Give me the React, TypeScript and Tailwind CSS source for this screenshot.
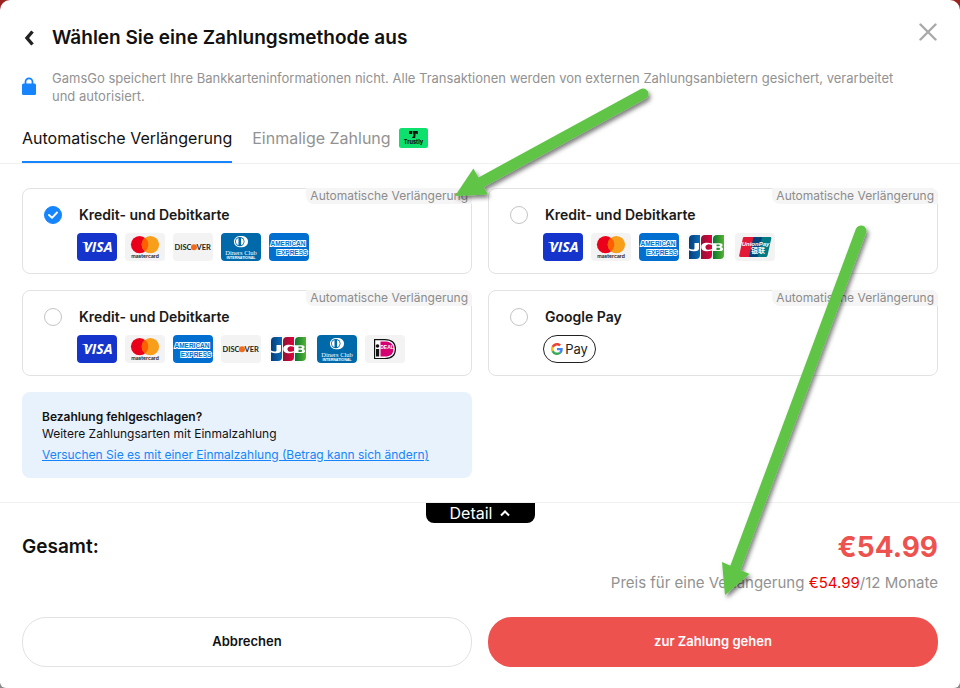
import clsx from "clsx";
import { useState } from "react";
import type { ReactNode } from "react";

type Brand = "visa" | "mastercard" | "discover" | "diners" | "amex" | "jcb" | "unionpay" | "ideal" | "gpay";

type PaymentMethod = {
  id: string;
  name: string;
  brands: Brand[];
};

const methods: PaymentMethod[] = [
  { id: "card-1", name: "Kredit- und Debitkarte", brands: ["visa", "mastercard", "discover", "diners", "amex"] },
  { id: "card-2", name: "Kredit- und Debitkarte", brands: ["visa", "mastercard", "amex", "jcb", "unionpay"] },
  { id: "card-3", name: "Kredit- und Debitkarte", brands: ["visa", "mastercard", "amex", "discover", "jcb", "diners", "ideal"] },
  { id: "google-pay", name: "Google Pay", brands: ["gpay"] },
];

const sans = "'Liberation Sans', Arial, sans-serif";

const Badge = ({ label, bg, children }: { label: string; bg: string; children: ReactNode }) => (
  <svg width="40" height="28" viewBox="0 0 40 28" role="img" aria-label={label} className="rounded">
    <rect width="40" height="28" fill={bg} />
    {children}
  </svg>
);

const Visa = () => (
  <Badge label="Visa" bg="#1434cb">
    <text x="21" y="19" textAnchor="middle" fontFamily="'Open Sans', sans-serif" fontSize="14" fontWeight="700" fontStyle="italic" fill="#fff">
      VISA
    </text>
    <path d="M5 9h4.200c.8 0 1.300.4 1.500 1.100l.8 3.400C10.300 11.300 8 9.700 5 9.200z" fill="#fff" />
  </Badge>
);

const Mastercard = () => (
  <Badge label="Mastercard" bg="#f3f3f3">
    <circle cx="14.600" cy="11.600" r="8.700" fill="#eb001b" />
    <circle cx="25.400" cy="11.600" r="8.700" fill="#f79e1b" />
    <path d="M20 4.800a8.700 8.700 0 0 1 0 13.600 8.700 8.700 0 0 1 0-13.600z" fill="#ff5f00" />
    <text x="20" y="25" textAnchor="middle" fontFamily="Inter, sans-serif" fontSize="5" fontWeight="600" fill="#111">
      mastercard
    </text>
  </Badge>
);

const Discover = () => (
  <Badge label="Discover" bg="#f3f3f3">
    <text x="18.500" y="17" textAnchor="end" fontFamily="Lato, sans-serif" fontSize="7.500" fontWeight="700" fill="#231f20">
      DISC
    </text>
    <circle cx="21" cy="14.200" r="3" fill="#f26b1d" />
    <text x="23.500" y="17" fontFamily="Lato, sans-serif" fontSize="7.500" fontWeight="700" fill="#231f20">
      VER
    </text>
  </Badge>
);

const Diners = () => (
  <Badge label="Diners Club" bg="#0069aa">
    <path d="M18.500 3h3a5.600 5.600 0 0 1 0 11.200h-3a5.600 5.600 0 0 1 0-11.200z" fill="#fff" />
    <circle cx="18.800" cy="8.600" r="4.700" fill="#0069aa" />
    <path d="M17.500 4.900a3.900 3.900 0 0 0 0 7.400zM20.100 4.900a3.900 3.900 0 0 1 0 7.400z" fill="#fff" />
    <text x="20" y="22" textAnchor="middle" fontFamily="'Liberation Serif', serif" fontSize="6.500" fill="#fff">
      Diners Club
    </text>
    <text x="20" y="25.500" textAnchor="middle" fontFamily={sans} fontSize="3.600" fontWeight="700" fill="#fff">
      INTERNATIONAL
    </text>
  </Badge>
);

const Amex = () => (
  <Badge label="American Express" bg="#016fd0">
    <g fontFamily={sans} fontSize="6.500" fontWeight="700" fill="#016fd0" stroke="#fff" strokeWidth="1.800" paintOrder="stroke">
      <text x="19" y="12.500" textAnchor="middle">
        AMERICAN
      </text>
      <text x="23" y="21.500" textAnchor="middle">
        EXPRESS
      </text>
    </g>
  </Badge>
);

const Jcb = () => (
  <Badge label="JCB" bg="#fafafa">
    <defs>
      <linearGradient id="jcb-blue">
        <stop offset="0" stopColor="#063e7c" />
        <stop offset="1" stopColor="#0b6cb8" />
      </linearGradient>
      <linearGradient id="jcb-red">
        <stop offset="0" stopColor="#8a1538" />
        <stop offset="1" stopColor="#e4003a" />
      </linearGradient>
      <linearGradient id="jcb-green">
        <stop offset="0" stopColor="#08762f" />
        <stop offset="1" stopColor="#57b331" />
      </linearGradient>
    </defs>
    <path d="M2 6a4 4 0 0 1 4-4h7v20a4 4 0 0 1-4 4H2z" fill="url(#jcb-blue)" />
    <path d="M14 6a4 4 0 0 1 4-4h7v20a4 4 0 0 1-4 4h-7z" fill="url(#jcb-red)" />
    <path d="M26 6a4 4 0 0 1 4-4h7v20a4 4 0 0 1-4 4h-7z" fill="url(#jcb-green)" />
    <path d="M7.500 10H12v5.500c0 2-1.500 2.700-4.400 2.700-2.500 0-4-.3-5.600-1v-1.700c1.500.7 2.700 1 3.800 1 1.200 0 1.700-.4 1.700-1.300z" fill="#fff" />
    <path d="M25 11.900c-1.500-.5-3-.8-4.300-.5-3 .6-3 4.700 0 5.300 1.300.3 2.800 0 4.300-.6v1.500c-5.500 1.600-10.800.7-10.800-3.600s5.300-5.100 10.800-3.600z" fill="#fff" />
    <path
      d="M26 10.200h7c3.300 0 3.400 3.200.8 3.700 3.200.4 3 4.200-.5 4.200H26zm3.500 1.200v1.900h2.400c1.300 0 1.300-1.900 0-1.900zm0 3.300v2.200h2.600c1.500 0 1.500-2.200 0-2.200z"
      fill="#fff"
      fillRule="evenodd"
    />
  </Badge>
);

const UnionPay = () => (
  <Badge label="UnionPay" bg="#f3f3f3">
    <path d="M9.500 4H20l-4.500 20H5.500C4.500 24 4 23.300 4.200 22.500L7.800 5.400C8 4.500 8.700 4 9.500 4z" fill="#e21836" />
    <path d="M18.500 4H29l-4.500 20H14z" fill="#00447c" />
    <path d="M27 4h8c1 0 1.500.7 1.300 1.500l-3.800 17c-.2.900-.9 1.500-1.800 1.500h-8z" fill="#007b84" />
    <text x="20.500" y="13" textAnchor="middle" fontFamily={sans} fontSize="6" fontWeight="700" fontStyle="italic" fill="#fff">
      UnionPay
    </text>
    <text x="23" y="20" textAnchor="middle" fontFamily="'Noto Sans CJK SC', sans-serif" fontSize="7" fontWeight="700" fill="#fff">
      银联
    </text>
  </Badge>
);

const Ideal = () => (
  <Badge label="iDEAL" bg="#f3f3f3">
    <path d="M9.600 4.600h10.200c7.200 0 10.600 3.800 10.600 9.400s-3.400 9.500-10.600 9.500H9.600z" fill="#fff" stroke="#111" strokeWidth="1.200" />
    <path d="M15.500 6.500h4.300c5.700 0 8.600 2.600 8.600 7.500s-2.900 7.600-8.600 7.600h-4.300z" fill="#d50072" />
    <circle cx="12.500" cy="11" r="1.800" fill="#111" />
    <path d="M11 14h3.200v7.600H11z" fill="#111" />
    <text x="22" y="14" textAnchor="middle" fontFamily={sans} fontSize="5" fontWeight="700" fill="#fff">
      DEAL
    </text>
  </Badge>
);

const GooglePay = () => (
  <span className="flex h-7 w-[53px] items-center justify-center gap-0.5 rounded-full border border-[#222] bg-white">
    <svg width="12" height="12" viewBox="0 0 48 48" aria-hidden="true">
      <path fill="#ea4335" d="M24 9.500c3.540 0 6.710 1.220 9.210 3.600l6.850-6.850C35.900 2.380 30.470 0 24 0 14.620 0 6.510 5.380 2.560 13.220l7.980 6.190C12.430 13.720 17.740 9.500 24 9.500z" />
      <path fill="#4285f4" d="M46.980 24.550c0-1.570-.15-3.090-.38-4.550H24v9.020h12.940c-.58 2.960-2.260 5.480-4.780 7.180l7.730 6c4.510-4.180 7.090-10.360 7.090-17.650z" />
      <path fill="#fbbc05" d="M10.530 28.590c-.48-1.450-.76-2.990-.76-4.590s.27-3.140.76-4.590l-7.980-6.190C.92 16.460 0 20.120 0 24s.92 7.540 2.560 10.780z" />
      <path fill="#34a853" d="M24 48c6.480 0 11.930-2.130 15.890-5.810l-7.730-6c-2.150 1.450-4.920 2.300-8.160 2.300-6.260 0-11.570-4.220-13.470-9.910l-7.980 6.190C6.510 42.620 14.620 48 24 48z" />
    </svg>
    <span className="text-[13px] leading-4 text-[#222]">Pay</span>
  </span>
);

const brandLogos: Record<Brand, () => ReactNode> = {
  visa: Visa,
  mastercard: Mastercard,
  discover: Discover,
  diners: Diners,
  amex: Amex,
  jcb: Jcb,
  unionpay: UnionPay,
  ideal: Ideal,
  gpay: GooglePay,
};

const TrustlyLogo = () => (
  <svg width="29" height="20" viewBox="0 0 29 20" role="img" aria-label="Trustly">
    <rect width="29" height="20" rx="2.500" fill="#0ee06e" />
    <path d="M10 3h3.200v3H10zM13.700 3h5.100v3.200l-2.200-.7-.4 4.500h-3.400l1.700-2.200z" fill="#111" />
    <text x="14.500" y="16" textAnchor="middle" fontFamily="Inter, sans-serif" fontSize="5.500" fontWeight="800" fill="#111">
      Trustly
    </text>
  </svg>
);

const MethodCard = ({ method, checked, onSelect }: { method: PaymentMethod; checked: boolean; onSelect: () => void }) => (
  <label htmlFor={method.id} className="relative flex h-[86px] cursor-pointer gap-3.5 rounded-lg border border-[#e2e2e2] pt-4 pl-5">
    <span className="absolute -top-px -right-px rounded-tr-lg rounded-bl-lg bg-[#f5f5f5] px-1 text-[12px] leading-4 text-[#8c8c8c]">
      Automatische Verlängerung
    </span>
    <span className="relative h-5 w-5 shrink-0">
      <input
        id={method.id}
        type="radio"
        name="method"
        checked={checked}
        onChange={onSelect}
        className="m-px block h-[18px] w-[18px] appearance-none rounded-full border border-[#c4c4c4] bg-white checked:border-[#1684fc] checked:bg-[#1684fc]"
      />
      {checked && (
        <svg width="18" height="18" viewBox="0 0 18 18" fill="none" className="pointer-events-none absolute top-px left-px" aria-hidden="true">
          <path d="M5 9l3 2.800 5-5.300" stroke="#fff" strokeWidth="1.900" strokeLinecap="round" strokeLinejoin="round" />
        </svg>
      )}
    </span>
    <span className="flex flex-col gap-2">
      <span className="pl-0.5 text-[14px] leading-5 font-semibold text-[#1a1a1a]">{method.name}</span>
      <span className="flex gap-2">
        {method.brands.map((brand) => {
          const Logo = brandLogos[brand];
          return <Logo key={brand} />;
        })}
      </span>
    </span>
  </label>
);

const Arrows = () => (
  <svg width="960" height="688" viewBox="0 0 960 688" className="pointer-events-none absolute top-0 left-0" aria-hidden="true">
    <defs>
      <filter id="arrow-shadow" x="-10%" y="-10%" width="120%" height="120%">
        <feDropShadow dx="2" dy="3" stdDeviation="2" floodColor="#000" floodOpacity="0.5" />
      </filter>
    </defs>
    <g fill="#61c546" stroke="#61c546" filter="url(#arrow-shadow)">
      <path d="M643 94L478 184" strokeWidth="11" strokeLinecap="round" />
      <path d="M455 196l18.400-27.500 14.600 26z" stroke="none" />
      <path d="M861 231L735 569" strokeWidth="11" strokeLinecap="round" />
      <path d="M725 595l-3-33 27.500 12z" stroke="none" />
    </g>
  </svg>
);

const App = () => {
  const [tab, setTab] = useState<"auto" | "once">("auto");
  const [selected, setSelected] = useState("card-1");

  return (
    <div className="relative min-h-screen bg-[linear-gradient(#9c2420_50%,#8a8a8a_50%)] font-[Inter,sans-serif]">
      <main className="min-h-screen rounded-t-[10px] rounded-b-md bg-white">
        <header className="flex h-[69px] items-start justify-between px-[22px] pt-6">
          <div className="flex items-center gap-4">
            <button type="button" aria-label="Zurück" className="flex h-7 w-[14px] items-center justify-center">
              <svg width="14" height="18" viewBox="0 0 14 18" fill="none" aria-hidden="true">
                <path d="M10.500 2.500L5 9l5.500 6.500" stroke="#222" strokeWidth="3.400" />
              </svg>
            </button>
            <h1 className="text-[19px] leading-7 font-semibold text-[#111]">Wählen Sie eine Zahlungsmethode aus</h1>
          </div>
          <button type="button" aria-label="Schließen" className="flex h-4 w-5 items-center justify-center">
            <svg width="18" height="18" viewBox="0 0 18 18" fill="none" aria-hidden="true">
              <path d="M1.500 1.500l15 15M16.500 1.500l-15 15" stroke="#aaa" strokeWidth="2.400" strokeLinecap="round" />
            </svg>
          </button>
        </header>

        <div className="flex items-start gap-4 pr-12 pl-[22px]">
          <svg width="14" height="18" viewBox="0 0 14 18" fill="none" className="mt-2 shrink-0" aria-hidden="true">
            <path d="M3.500 8V4.800a3.500 3.500 0 0 1 7 0V8" stroke="#1684fc" strokeWidth="1.800" />
            <rect y="6.500" width="14" height="11.500" rx="1.500" fill="#1684fc" />
          </svg>
          <p className="text-[13px] leading-[18px] text-[#929292]">
            GamsGo speichert Ihre Bankkarteninformationen nicht. Alle Transaktionen werden von externen Zahlungsanbietern
            gesichert, verarbeitet und autorisiert.
          </p>
        </div>

        <div role="tablist" className="mt-[10px] flex h-[49px] items-stretch gap-5 border-b border-[#f0f0f0] px-[22px]">
          <button
            type="button"
            role="tab"
            aria-selected={tab === "auto"}
            onClick={() => setTab("auto")}
            className={clsx("border-b-2 text-[16px]", tab === "auto" ? "border-[#1684fc] text-[#111]" : "border-transparent text-[#929292]")}
          >
            Automatische Verlängerung
          </button>
          <button
            type="button"
            role="tab"
            aria-selected={tab === "once"}
            onClick={() => setTab("once")}
            className={clsx("flex items-center gap-2 border-b-2 text-[16px]", tab === "once" ? "border-[#1684fc] text-[#111]" : "border-transparent text-[#929292]")}
          >
            Einmalige Zahlung
            <TrustlyLogo />
          </button>
        </div>

        <section className="grid grid-cols-2 gap-4 px-[22px] pt-6 pb-6">
          {methods.map((method) => (
            <MethodCard key={method.id} method={method} checked={selected === method.id} onSelect={() => setSelected(method.id)} />
          ))}
          <div className="h-[86px] rounded-lg bg-[#e8f2fd] px-5 pt-4 text-[12px] leading-[17px] text-[#111]">
            <p className="font-semibold">Bezahlung fehlgeschlagen?</p>
            <p>Weitere Zahlungsarten mit Einmalzahlung</p>
            <a href="#einmalzahlung" className="mt-1 block text-[#1684fc] underline">
              Versuchen Sie es mit einer Einmalzahlung (Betrag kann sich ändern)
            </a>
          </div>
        </section>

        <footer className="border-t border-[#f0f0f0] px-[22px] pb-5">
          <button type="button" className="mx-auto flex h-5 w-[109px] items-center justify-center gap-2 rounded-b-lg bg-black text-[16px] text-white">
            Detail
            <svg width="10" height="8" viewBox="0 0 10 8" fill="none" aria-hidden="true">
              <path d="M1 6.500l4-4 4 4" stroke="#fff" strokeWidth="2" />
            </svg>
          </button>
          <div className="mt-2 flex items-center justify-between leading-8">
            <span className="text-[19px] font-semibold text-[#111]">Gesamt:</span>
            <span className="text-[28px] font-bold text-[#ee524f]">€54.99</span>
          </div>
          <p className="mt-2 text-right text-[15px] leading-6 text-[#929292]">
            Preis für eine Verlängerung <span className="text-[#f00000]">€54.99</span>/12 Monate
          </p>
          <div className="mt-[22px] grid grid-cols-2 gap-4">
            <button type="button" className="h-[50px] rounded-3xl border border-[#e2e2e2] text-[13px] font-semibold text-[#111]">
              Abbrechen
            </button>
            <button type="button" className="h-[50px] rounded-3xl bg-[#ee524f] text-[13px] font-semibold text-white">
              zur Zahlung gehen
            </button>
          </div>
        </footer>
      </main>
      <Arrows />
    </div>
  );
};

export default App;
